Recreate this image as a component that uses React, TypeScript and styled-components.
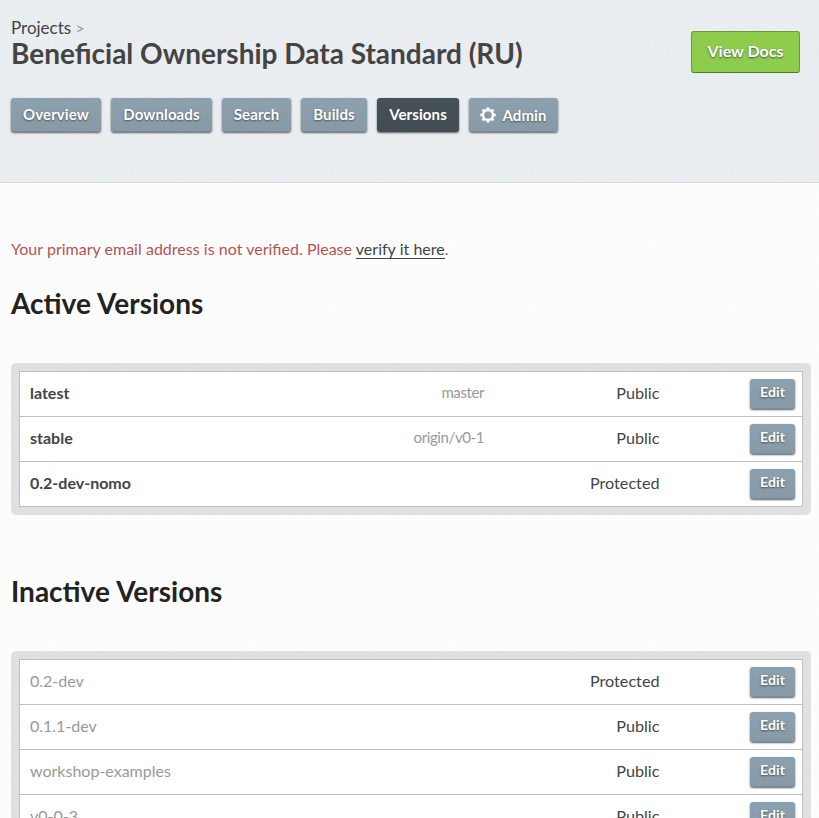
import React from "react";
import styled, { createGlobalStyle, css } from "styled-components";

const grain = (strength: number) =>
  `url("data:image/svg+xml,${encodeURIComponent(
    `<svg xmlns='http://www.w3.org/2000/svg' width='200' height='200'><filter id='n' x='0' y='0' width='100%' height='100%'><feTurbulence type='fractalNoise' baseFrequency='0.6' numOctaves='3' stitchTiles='stitch'/><feComponentTransfer><feFuncA type='linear' slope='0' intercept='${strength}'/></feComponentTransfer></filter><rect width='200' height='200' filter='url(#n)'/></svg>`
  )}")`;

const GlobalStyle = createGlobalStyle`
  html, body { margin: 0; padding: 0; height: 100%; overflow: hidden; }
  body {
    background: #fcfcfc;
    color: #444;
    font: 16px/24px Lato, "Liberation Sans", sans-serif;
  }
  a { color: inherit; text-decoration: none; }
  ul { list-style: none; margin: 0; padding: 0; }
`;

const Page = styled.div`
  height: 818px;
  overflow: hidden;
  background: ${grain(0.025)} #fefefe;
`;

const Masthead = styled.header`
  box-sizing: border-box;
  height: 183px;
  padding: 16px 19px 0 11px;
  border-bottom: 1px solid #d1dbe2;
  background: ${grain(0.1)} #eef3f6;
`;

const TitleRow = styled.div`
  display: flex;
  justify-content: space-between;
  align-items: flex-start;
  height: 82px;
`;

const Crumb = styled.div`
  font-size: 17px;
  line-height: 24px;
  height: 21px;
  span { font-size: 16px; color: #999; }
`;

const Title = styled.h1`
  margin: 0;
  font-size: 28px;
  line-height: 32px;
  font-weight: 700;
  color: #444;
`;

const DocsButton = styled.a`
  box-sizing: border-box;
  margin-top: 15px;
  width: 109px;
  height: 42px;
  border: 1px solid #6a9a35;
  border-bottom-color: #4f7d26;
  border-radius: 3px;
  background: #8ecc4c;
  color: #fff;
  font-weight: 700;
  line-height: 37px;
  text-align: center;
  text-shadow: 0 1px 2px #465158;
`;

const buttonFace = css`
  border-radius: 3px;
  background: linear-gradient(#8ca1af, #8799a5);
  box-shadow: inset 0 -1px 0 rgba(70, 81, 88, 0.2), 0 1px 2px rgba(70, 81, 88, 0.9);
  color: #fff;
  font-weight: 700;
  text-shadow: 0 1px 2px #465158;
`;

const Nav = styled.ul`
  display: flex;
  gap: 10px;
`;

const NavButton = styled.a<{ $width: number; $active?: boolean }>`
  ${buttonFace}
  display: flex;
  align-items: center;
  justify-content: center;
  gap: 6px;
  width: ${(p) => p.$width}px;
  height: 34px;
  font-size: 15px;
  letter-spacing: 0.1px;
  ${(p) => p.$active && css`background: linear-gradient(#465158, #434c53);`}
`;

const NavText = styled.span<{ $low?: boolean }>`
  line-height: 32px;
  padding-bottom: ${(p) => (p.$low ? 0 : 2)}px;
`;

const Content = styled.main`
  padding: 54px 8px 0 11px;
`;

const Notice = styled.p`
  margin: 0;
  color: #b55353;
  word-spacing: 0.11px;
  a { color: #444; border-bottom: 1px solid #444; }
`;

const Heading = styled.h2`
  margin: 0;
  font-size: 28px;
  line-height: 34px;
  font-weight: 700;
  color: #222;
  word-spacing: 0.5px;
`;

const Section = styled.section<{ $gap: number }>`
  margin-top: ${(p) => p.$gap}px;
`;

const Frame = styled.div`
  margin-top: 43px;
  padding: 8px;
  border-radius: 5px;
  background: rgba(0, 0, 0, 0.11);
`;

const Versions = styled.ul`
  border: 1px solid #bfbfbf;
  background: #fff;
`;

const Version = styled.li`
  box-sizing: border-box;
  display: grid;
  grid-template-columns: 300px 1fr 175px 136px;
  height: 45px;
  padding: 0 7px 0 10px;
  line-height: 42px;
  border-bottom: 1px solid #bfbfbf;
  &:last-child { height: 44px; border-bottom: 0; }
`;

const Name = styled.a<{ $active: boolean }>`
  font-weight: ${(p) => (p.$active ? 700 : 400)};
  color: ${(p) => (p.$active ? "#444" : "#999")};
`;

const Branch = styled.span`
  font-size: 15px;
  letter-spacing: -0.4px;
  line-height: 41px;
  color: #999;
  text-align: right;
`;

const Privacy = styled.span`
  text-align: right;
  font-size: 16.2px;
  margin-right: -0.5px;
`;

const EditButton = styled.a`
  ${buttonFace}
  justify-self: end;
  margin-top: 7px;
  width: 45px;
  height: 30px;
  font-size: 14px;
  letter-spacing: 0.1px;
  line-height: 26px;
  text-align: center;
`;

const Gear = () => (
  <svg width="16" height="16" viewBox="0 0 16 16" fill="none" stroke="#fff" aria-hidden="true">
    <circle cx="8" cy="8" r="5" strokeWidth="2.3" />
    <g strokeWidth="2.8">
      {[0, 45, 90, 135, 180, 225, 270, 315].map((a) => (
        <path key={a} d="M8 .4V3" transform={`rotate(${a} 8 8)`} />
      ))}
    </g>
  </svg>
);

const tabs = [
  { label: "Overview", width: 90 },
  { label: "Downloads", width: 101 },
  { label: "Search", width: 69 },
  { label: "Builds", width: 66 },
  { label: "Versions", width: 82, active: true },
  { label: "Admin", width: 89, gear: true },
];

type Row = { name: string; branch?: string; privacy: string };

const activeRows: Row[] = [
  { name: "latest", branch: "master", privacy: "Public" },
  { name: "stable", branch: "origin/v0-1", privacy: "Public" },
  { name: "0.2-dev-nomo", privacy: "Protected" },
];

const inactiveRows: Row[] = [
  { name: "0.2-dev", privacy: "Protected" },
  { name: "0.1.1-dev", privacy: "Public" },
  { name: "workshop-examples", privacy: "Public" },
  { name: "v0-0-3", privacy: "Public" },
];

const VersionList = ({ rows, active = false }: { rows: Row[]; active?: boolean }) => (
  <Frame>
    <Versions>
      {rows.map((r) => (
        <Version key={r.name}>
          <Name $active={active}>{r.name}</Name>
          <Branch>{r.branch}</Branch>
          <Privacy>{r.privacy}</Privacy>
          <EditButton>Edit</EditButton>
        </Version>
      ))}
    </Versions>
  </Frame>
);

export default function App() {
  return (
    <Page>
      <GlobalStyle />
      <Masthead>
        <TitleRow>
          <div>
            <Crumb>
              Projects <span>&gt;</span>
            </Crumb>
            <Title>Beneficial Ownership Data Standard (RU)</Title>
          </div>
          <DocsButton>View Docs</DocsButton>
        </TitleRow>
        <Nav>
          {tabs.map((t) => (
            <li key={t.label}>
              <NavButton $width={t.width} $active={t.active}>
                {t.gear && <Gear />}
                <NavText $low={t.gear}>{t.label}</NavText>
              </NavButton>
            </li>
          ))}
        </Nav>
      </Masthead>
      <Content>
        <Notice>
          Your primary email address is not verified. Please <a>verify it here</a>.
        </Notice>
        <Section $gap={25}>
          <Heading>Active Versions</Heading>
          <VersionList rows={activeRows} active />
        </Section>
        <Section $gap={59}>
          <Heading>Inactive Versions</Heading>
          <VersionList rows={inactiveRows} />
        </Section>
      </Content>
    </Page>
  );
}
